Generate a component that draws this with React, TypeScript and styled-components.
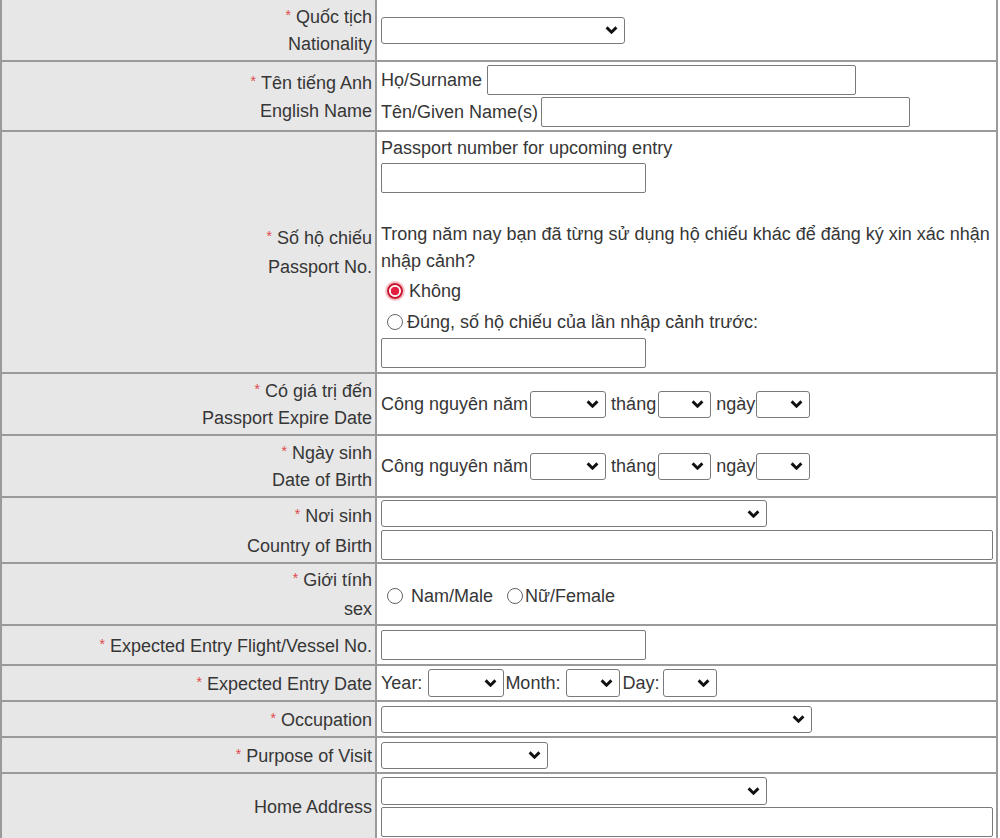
import React from "react";
import styled, { createGlobalStyle } from "styled-components";

const GlobalStyle = createGlobalStyle`
  html, body {
    margin: 0;
    padding: 0;
    background: #fff;
  }
  body {
    font-family: "Liberation Sans", Arial, sans-serif;
    font-size: 18px;
    color: #363636;
  }
  * {
    box-sizing: border-box;
  }
`;

const line = "#9a9a9a";

const Sheet = styled.div`
  width: 998px;
  border-left: 2px solid ${line};
  border-right: 2px solid ${line};
`;

const Row = styled.div<{ $h: number }>`
  display: grid;
  grid-template-columns: 375px 1fr;
  height: ${(p) => p.$h}px;
  border-bottom: 2px solid ${line};
`;

const Label = styled.div<{ $lh?: number }>`
  background: #e7e7e7;
  border-right: 2px solid ${line};
  padding-right: 3px;
  display: flex;
  flex-direction: column;
  justify-content: center;
  align-items: flex-end;
  text-align: right;
  line-height: ${(p) => p.$lh ?? 27}px;
  white-space: nowrap;
`;

const Star = styled.span`
  color: #e0474c;
  font-size: 14px;
  vertical-align: 3px;
  margin-right: 5px;
`;

const Value = styled.div<{ $gap?: number }>`
  padding-left: 4px;
  display: flex;
  flex-direction: column;
  justify-content: center;
  align-items: flex-start;
  gap: ${(p) => p.$gap ?? 0}px;
  min-width: 0;
`;

const Inline = styled.div<{ $h?: number }>`
  display: flex;
  align-items: center;
  white-space: pre;
  height: ${(p) => p.$h ?? 28}px;
`;

const Caption = styled.div`
  line-height: 24px;
  white-space: nowrap;
`;

const Question = styled.div`
  margin-top: 28px;
  line-height: 27px;
  white-space: nowrap;
`;

const TextBox = styled.input<{ $w: number; $ml?: number; $mt?: number }>`
  width: ${(p) => p.$w}px;
  height: 30px;
  margin: ${(p) => p.$mt ?? 0}px 0 0 ${(p) => p.$ml ?? 0}px;
  padding: 0 4px;
  border: 1px solid #7a7a7a;
  border-radius: 2px;
  background: #fff;
  font: inherit;
  flex-shrink: 0;
`;

const SelectWrap = styled.span<{ $w: number; $h: number; $mx: string }>`
  position: relative;
  display: inline-block;
  flex-shrink: 0;
  width: ${(p) => p.$w}px;
  height: ${(p) => p.$h}px;
  margin: ${(p) => p.$mx};
`;

const NativeSelect = styled.select`
  appearance: none;
  width: 100%;
  height: 100%;
  margin: 0;
  padding: 0 24px 0 4px;
  border: 1px solid #7a7a7a;
  border-radius: 3px;
  background: #fff;
  font: inherit;
  color: #333;
`;

const Chevron = styled.svg`
  position: absolute;
  right: 7px;
  top: 50%;
  margin-top: -4px;
  pointer-events: none;
`;

const RadioDot = styled.input.attrs({ type: "radio" })<{ $mr?: number }>`
  appearance: none;
  width: 16px;
  height: 16px;
  margin: 0 ${(p) => p.$mr ?? 8}px 0 6px;
  border: 1px solid #666;
  border-radius: 50%;
  background: #fff;
  flex-shrink: 0;
  &:checked {
    border: 2px solid #c9162f;
    background: radial-gradient(circle, #e3203f 0 4px, #fff 4.6px);
    box-shadow: 0 0 0 2px #f6c3cb;
  }
`;

const Choice = styled.label<{ $mr?: number }>`
  display: inline-flex;
  align-items: center;
  margin-right: ${(p) => p.$mr ?? 0}px;
`;

type SelProps = { w: number; h?: number; mx?: string };

const Select = ({ w, h = 27, mx = "0" }: SelProps) => (
  <SelectWrap $w={w} $h={h} $mx={mx}>
    <NativeSelect defaultValue="">
      <option value=""></option>
    </NativeSelect>
    <Chevron width="13" height="8" viewBox="0 0 13 8">
      <path d="M1.6 1.4 L6.5 6.2 L11.4 1.4" fill="none" stroke="#111" strokeWidth="2.9" />
    </Chevron>
  </SelectWrap>
);

const Req = ({ children }: { children: React.ReactNode }) => (
  <div>
    <Star>*</Star>
    {children}
  </div>
);

const EraDate = () => (
  <Inline>
    <span>Công nguyên năm</span>
    <Select w={76} mx="0 0 0 2px" />
    <span> tháng</span>
    <Select w={53} mx="0 0 0 2px" />
    <span> ngày</span>
    <Select w={54} mx="0 0 0 1px" />
  </Inline>
);

export default function App() {
  return (
    <>
      <GlobalStyle />
      <Sheet>
        <Row $h={62}>
          <Label>
            <Req>Quốc tịch</Req>
            <div>Nationality</div>
          </Label>
          <Value>
            <Select w={244} />
          </Value>
        </Row>

        <Row $h={70}>
          <Label $lh={28}>
            <Req>Tên tiếng Anh</Req>
            <div>English Name</div>
          </Label>
          <Value $gap={2}>
            <Inline $h={30}>
              <span>Họ/Surname</span>
              <TextBox $w={369} $ml={5} />
            </Inline>
            <Inline $h={30}>
              <span>Tên/Given Name(s)</span>
              <TextBox $w={369} $ml={3} />
            </Inline>
          </Value>
        </Row>

        <Row $h={242}>
          <Label $lh={29}>
            <Req>Số hộ chiếu</Req>
            <div>Passport No.</div>
          </Label>
          <Value>
            <Caption>Passport number for upcoming entry</Caption>
            <TextBox $w={265} $mt={3} />
            <Question>
              Trong năm nay bạn đã từng sử dụng hộ chiếu khác để đăng ký xin xác nhận
              <br />
              nhập cảnh?
            </Question>
            <Inline style={{ marginTop: 2 }}>
              <Choice>
                <RadioDot name="prev" defaultChecked $mr={6} />
                Không
              </Choice>
            </Inline>
            <Inline style={{ marginTop: 3 }}>
              <Choice>
                <RadioDot name="prev" $mr={4} />
                Đúng, số hộ chiếu của lần nhập cảnh trước:
              </Choice>
            </Inline>
            <TextBox $w={265} $mt={2} />
          </Value>
        </Row>

        <Row $h={62}>
          <Label>
            <Req>Có giá trị đến</Req>
            <div>Passport Expire Date</div>
          </Label>
          <Value>
            <EraDate />
          </Value>
        </Row>

        <Row $h={62}>
          <Label>
            <Req>Ngày sinh</Req>
            <div>Date of Birth</div>
          </Label>
          <Value>
            <EraDate />
          </Value>
        </Row>

        <Row $h={66}>
          <Label $lh={30}>
            <Req>Nơi sinh</Req>
            <div>Country of Birth</div>
          </Label>
          <Value $gap={3}>
            <Select w={386} />
            <TextBox $w={612} />
          </Value>
        </Row>

        <Row $h={62}>
          <Label $lh={29}>
            <Req>Giới tính</Req>
            <div>sex</div>
          </Label>
          <Value>
            <Inline style={{ marginTop: 4 }}>
              <Choice $mr={8}>
                <RadioDot name="sex" />
                Nam/Male
              </Choice>
              <Choice>
                <RadioDot name="sex" $mr={2} />
                Nữ/Female
              </Choice>
            </Inline>
          </Value>
        </Row>

        <Row $h={40}>
          <Label>
            <Req>Expected Entry Flight/Vessel No.</Req>
          </Label>
          <Value>
            <TextBox $w={265} />
          </Value>
        </Row>

        <Row $h={36}>
          <Label>
            <Req>Expected Entry Date</Req>
          </Label>
          <Value>
            <Inline>
              <span>Year:</span>
              <Select w={76} h={28} mx="0 1px 0 6px" />
              <span>Month:</span>
              <Select w={54} h={28} mx="0 2px 0 6px" />
              <span>Day:</span>
              <Select w={54} h={28} mx="0 0 0 4px" />
            </Inline>
          </Value>
        </Row>

        <Row $h={36}>
          <Label>
            <Req>Occupation</Req>
          </Label>
          <Value>
            <Select w={431} />
          </Value>
        </Row>

        <Row $h={36}>
          <Label>
            <Req>Purpose of Visit</Req>
          </Label>
          <Value>
            <Select w={167} />
          </Value>
        </Row>

        <Row $h={68}>
          <Label>
            <div>Home Address</div>
          </Label>
          <Value $gap={2}>
            <Select w={386} h={28} />
            <TextBox $w={612} />
          </Value>
        </Row>
      </Sheet>
    </>
  );
}
